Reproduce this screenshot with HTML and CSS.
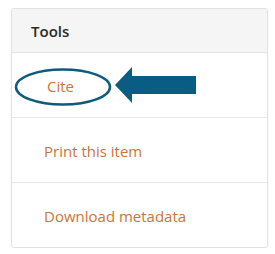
FILE: index.html
```html
<!DOCTYPE html>
<html>
<head>
    <meta charset="UTF-8">
    <title>Tools</title>
    <link rel="stylesheet" href="styles.css">
</head>
<body>
    <div class="panel">
        <div class="panel-head">Tools</div>
        <ul class="tools">
            <li class="cite"><a href="#">Cite</a></li>
            <li><a href="#">Print this item</a></li>
            <li><a href="#">Download metadata</a></li>
        </ul>
    </div>

    <!-- annotation drawn over the panel -->
    <svg class="mark" width="275" height="254" viewBox="0 0 275 254">
        <ellipse cx="63" cy="87" rx="47" ry="17.5" fill="none" stroke="#0d5b7d" stroke-width="2.5"/>
        <polygon points="115,85 132,67 132,76 196,76 196,94 132,94 132,103" fill="#0a5d82"/>
    </svg>
</body>
</html>
```

FILE: styles.css
```css
body {
    margin: 0;
    padding: 8px 7px 0 11px;
    font-family: 'Open Sans', 'Noto Sans', sans-serif;
    background: #fff;
    position: relative;
}
.panel {
    border: 1px solid #e2e2e2;
    border-radius: 3px;
    box-shadow: 0 1px 2px rgba(0, 0, 0, 0.06);
    overflow: hidden;
}
.panel-head {
    background: #f5f5f5;
    border-bottom: 1px solid #e4e4e4;
    height: 43px;
    line-height: 44px;
    padding-left: 19px;
    font-size: 15px;
    font-weight: 600;
    color: #2a2a2a;
}
.tools {
    list-style: none;
    margin: 0;
    padding: 0;
}
.tools li {
    height: 64px;
    line-height: 67px;
    padding-left: 32px;
    border-bottom: 1px solid #e8e8e8;
}
.tools li:last-child {
    border-bottom: none;
}
.tools .cite {
    padding-left: 35px;
}
.tools a {
    color: #cd7338;
    text-decoration: none;
    font-size: 15px;
}
.mark {
    position: absolute;
    top: 0;
    left: 0;
}
```
